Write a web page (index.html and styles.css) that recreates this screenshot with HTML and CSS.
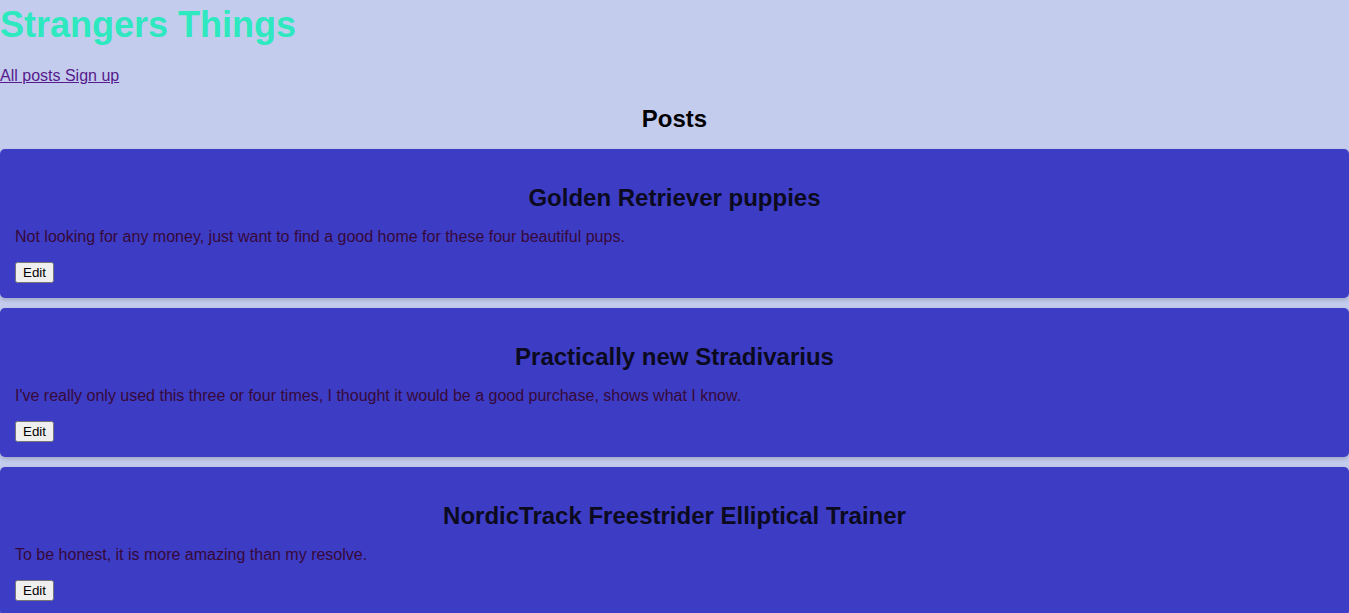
FILE: index.html
```html
<!DOCTYPE html>
<html>
<head>
<meta charset="utf-8">
<title>Strangers Things</title>
<link rel="stylesheet" href="styles.css">
</head>
<body>
<header class="site-header">
  <h1 class="site-title">Strangers Things</h1>
  <nav class="site-nav"><a href="#">All posts </a><a href="#">Sign up</a></nav>
</header>
<main>
  <h2 class="page-title">Posts</h2>
  <div class="posts">
    <article class="post">
      <h2 class="post-title">Golden Retriever puppies</h2>
      <p class="post-desc">Not looking for any money, just want to find a good home for these four beautiful pups.</p>
      <button class="edit-btn">Edit</button>
    </article>
    <article class="post">
      <h2 class="post-title">Practically new Stradivarius</h2>
      <p class="post-desc">I've really only used this three or four times, I thought it would be a good purchase, shows what I know.</p>
      <button class="edit-btn">Edit</button>
    </article>
    <article class="post">
      <h2 class="post-title">NordicTrack Freestrider Elliptical Trainer</h2>
      <p class="post-desc">To be honest, it is more amazing than my resolve.</p>
      <button class="edit-btn">Edit</button>
    </article>
  </div>
</main>
</body>
</html>
```

FILE: styles.css
```css
html, body {
  margin: 0;
  padding: 0;
}
body {
  background: #c4ccee;
  font-family: "Liberation Sans", Arial, sans-serif;
  font-size: 16px;
  color: #000;
}
.site-header {
  padding-top: 4px;
}
.site-title {
  margin: 0;
  font-size: 36px;
  font-weight: bold;
  color: #2ee8bf;
}
.site-nav {
  margin-top: 21px;
}
.site-nav a {
  color: #551a8b;
  text-decoration: underline;
}
.page-title {
  margin: 20px 0 16px;
  font-size: 24px;
  text-align: center;
  color: #000;
}
.posts {
  display: flex;
  flex-direction: column;
  gap: 10px;
}
.post {
  background: #3d3cc4;
  border-radius: 5px;
  box-shadow: 0 2px 4px rgba(0, 0, 0, 0.18);
  padding: 15px;
}
.post-title {
  margin: 20px 0 16px;
  font-size: 24px;
  text-align: center;
  color: #0b0a1e;
}
.post-desc {
  margin: 0 0 16px;
  color: #36093a;
}
.edit-btn {
  display: block;
  font-family: "Liberation Sans", Arial, sans-serif;
  font-size: 13.333px;
}
```
